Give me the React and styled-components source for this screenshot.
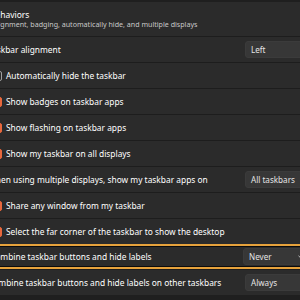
import React from 'react'
import styled, { createGlobalStyle } from 'styled-components'

const GlobalStyle = createGlobalStyle`
  html, body {
    margin: 0;
    padding: 0;
    background: #1f1f1f;
    overflow: hidden;
  }
  body {
    font-family: "Noto Sans", "Open Sans", sans-serif;
    color: #ffffff;
    -webkit-font-smoothing: antialiased;
  }
`

const Page = styled.div`
  width: 354px;
  margin-left: -24px;
  padding-top: 2px;
`

const Panel = styled.div`
  background: #2b2b2b;
`

const Header = styled.div`
  box-sizing: border-box;
  height: 34px;
  padding-top: 8px;
  margin-left: -19px;
  display: flex;
  flex-direction: column;
`

const Title = styled.div`
  font-size: 8.5px;
  line-height: 10px;
  color: #ffffff;
  white-space: nowrap;
`

const Subtitle = styled.div`
  font-size: 7.1px;
  line-height: 9px;
  color: #c8c8c8;
  margin-left: 8px;
  white-space: nowrap;
`

const Row = styled.div`
  box-sizing: border-box;
  height: 26px;
  display: flex;
  align-items: center;
  justify-content: space-between;
  padding: 0 17px 0 ${p => (p.$check ? 16 : 12)}px;
  border-top: 1px solid #1d1d1d;
  ${p =>
    p.$focused &&
    `
    border: 2px solid #e6a23c;
    box-shadow: inset 0 0 0 1px #0c0c0c;
    height: 25px;
  `}
`

const LabelWrap = styled.div`
  display: flex;
  align-items: center;
  gap: 4px;
`

const Label = styled.span`
  font-size: 8.4px;
  line-height: 12px;
  color: #ffffff;
  white-space: nowrap;
`

const Box = styled.span`
  box-sizing: border-box;
  width: 10px;
  height: 10px;
  border-radius: 2px;
  background: ${p => (p.$on ? '#e8683d' : 'transparent')};
  border: 1px solid ${p => (p.$on ? '#e8683d' : '#a0a0a0')};
`

const Select = styled.div`
  box-sizing: border-box;
  width: 68px;
  height: 17px;
  border-radius: 3px;
  background: #373737;
  border: 1px solid #3b3b3b;
  display: flex;
  align-items: center;
  justify-content: space-between;
  padding: 0 6px 0 5px;
  font-size: 8.1px;
  color: #e4e4e4;
  white-space: nowrap;
`

const Chevron = () => (
  <svg width="6" height="4" viewBox="0 0 6 4" style={{ flexShrink: 0 }}>
    <path d="M0.5 0.8 L3 3.2 L5.5 0.8" fill="none" stroke="#cfcfcf" strokeWidth="0.9" />
  </svg>
)

const Dropdown = ({ value }) => (
  <Select>
    <span>{value}</span>
    <Chevron />
  </Select>
)

const items = [
  { label: 'Taskbar alignment', select: 'Left' },
  { label: 'Automatically hide the taskbar', check: false },
  { label: 'Show badges on taskbar apps', check: true },
  { label: 'Show flashing on taskbar apps', check: true },
  { label: 'Show my taskbar on all displays', check: true },
  { label: 'When using multiple displays, show my taskbar apps on', select: 'All taskbars' },
  { label: 'Share any window from my taskbar', check: true },
  { label: 'Select the far corner of the taskbar to show the desktop', check: true },
  { label: 'Combine taskbar buttons and hide labels', select: 'Never', focused: true },
  { label: 'Combine taskbar buttons and hide labels on other taskbars', select: 'Always' }
]

export default function App () {
  return (
    <>
      <GlobalStyle />
      <Page>
        <Panel>
          <Header>
            <Title>Taskbar behaviors</Title>
            <Subtitle>Taskbar alignment, badging, automatically hide, and multiple displays</Subtitle>
          </Header>
          {items.map((it, i) => {
            const hasCheck = typeof it.check === 'boolean'
            return (
              <Row key={i} $check={hasCheck} $focused={it.focused}>
                <LabelWrap>
                  {hasCheck && <Box $on={it.check} />}
                  <Label>{it.label}</Label>
                </LabelWrap>
                {it.select && <Dropdown value={it.select} />}
              </Row>
            )
          })}
        </Panel>
      </Page>
    </>
  )
}
